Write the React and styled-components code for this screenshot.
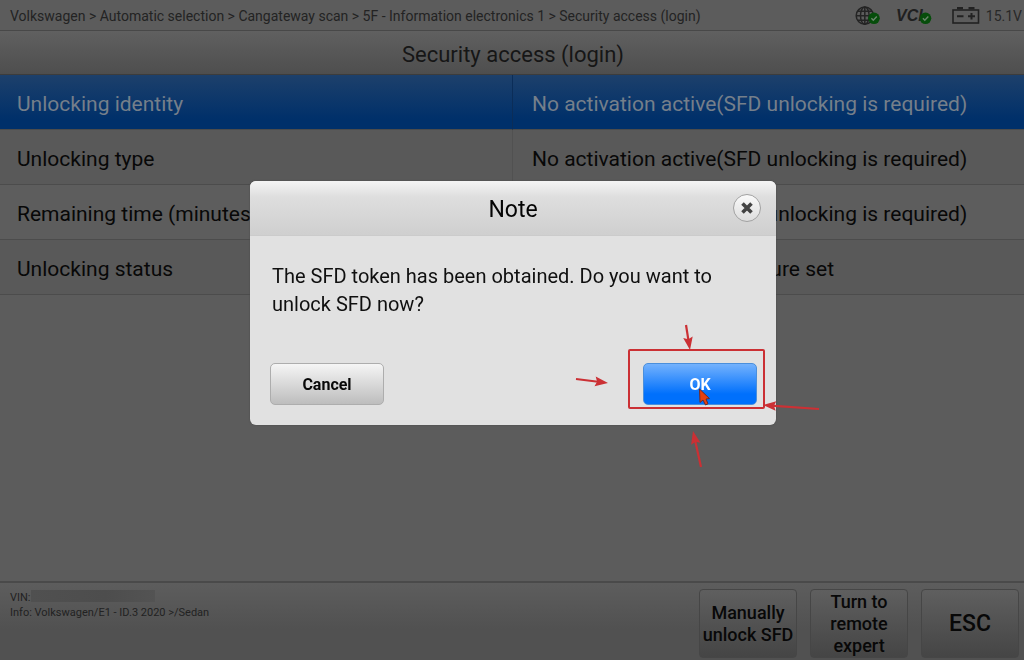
import React from 'react';
import styled, { createGlobalStyle } from 'styled-components';

const GlobalStyle = createGlobalStyle`
  * {
    box-sizing: border-box;
  }

  html,
  body,
  #root {
    height: 100%;
  }

  body {
    margin: 0;
    background: #5c5c5c;
    color: #101010;
    font-family: Roboto, 'Liberation Sans', sans-serif;
  }

  button {
    font-family: inherit;
    cursor: pointer;
  }
`;

const Screen = styled.div`
  display: flex;
  flex-direction: column;
  min-height: 100%;
  overflow: hidden;
`;

const TopBar = styled.header`
  display: flex;
  align-items: center;
  justify-content: space-between;
  height: 31px;
  padding: 1px 2px 0 10px;
  background: #5c5c5c;
  border-bottom: 1px solid #484848;
`;

const Breadcrumb = styled.nav`
  color: #232323;
  font-size: 14px;
  line-height: 20px;
  white-space: nowrap;
`;

const StatusList = styled.div`
  display: flex;
  align-items: center;
  gap: 16px;
  color: #282828;
  font-size: 14px;
  line-height: 20px;
`;

const StatusItem = styled.div`
  display: flex;
  align-items: center;
  gap: 6px;

  & svg {
    display: block;
    overflow: visible;
  }
`;

const PageTitle = styled.h1`
  margin: 0;
  height: 44px;
  padding-left: 2px;
  background: linear-gradient(#606060, #4e4e4e);
  border-bottom: 1px solid #3c3c3c;
  color: #161616;
  font-size: 22px;
  font-weight: 400;
  line-height: 48px;
  text-align: center;
`;

const Table = styled.table`
  width: 100%;
  table-layout: fixed;
  border-collapse: separate;
  border-spacing: 0;
  font-size: 21px;
  line-height: 28px;
  text-align: left;
`;

const Row = styled.tr`
  height: 55px;
  background: ${({ $active, $shade }) =>
    $active ? 'linear-gradient(#1d406b, #00306a 80%)' : $shade ? '#595959' : '#5d5d5d'};
  color: ${({ $active }) => ($active ? '#757f8a' : '#080808')};

  & > * {
    padding: 3px 17px 0;
    border-bottom: 1px solid #4c4c4c;
    font-weight: 400;
    white-space: nowrap;
  }

  & > td {
    padding-left: 19px;
    border-left: 1px solid ${({ $active }) => ($active ? '#0b2d58' : '#515151')};
  }
`;

const Footer = styled.footer`
  display: flex;
  justify-content: space-between;
  margin-top: auto;
  height: 79px;
  padding: 6px 5px 2px 10px;
  border-top: 2px solid #4a4a4a;
  background: linear-gradient(#5d5d5d, #515151 60%);
`;

const VehicleInfo = styled.div`
  padding-top: 1px;
  color: #222222;
  font-size: 11px;
  line-height: 15px;
`;

const InfoLine = styled.div`
  display: flex;
  align-items: center;
`;

const Redacted = styled.span`
  width: 124px;
  height: 12px;
  margin-bottom: 3px;
  background: linear-gradient(90deg, #505050, #4d4d4d 60%, #535353);
`;

const FooterActions = styled.div`
  display: flex;
  gap: 13px;
`;

const FooterButton = styled.button`
  width: 98px;
  height: 69px;
  padding: 1px 0 0;
  border: 1px solid #464646;
  border-radius: 4px;
  background: linear-gradient(#5f5f5f, #454545);
  color: #080808;
  font-size: ${({ $large }) => ($large ? '23px' : '18px')};
  font-weight: 500;
  line-height: 22px;
`;

const Overlay = styled.div`
  position: fixed;
  inset: 0;
  display: flex;
  align-items: center;
  justify-content: center;
  padding: 0 0 54px 2px;
`;

const Dialog = styled.section`
  position: relative;
  width: 526px;
  border-radius: 6px;
  background: #e1e1e1;
  box-shadow: 0 0 2px #4a4a4a;
`;

const DialogHeader = styled.header`
  display: grid;
  grid-template-columns: 28px 1fr 28px;
  align-items: center;
  height: 55px;
  padding: 0 15px;
  border-bottom: 1px solid #cbcbcb;
  border-radius: 6px 6px 0 0;
  background: linear-gradient(#f4f4f4, #dedede 30%, #cfcfcf);
`;

const DialogTitle = styled.h2`
  grid-column: 2;
  margin: 0;
  padding-top: 3px;
  color: #040404;
  font-size: 23px;
  font-weight: 400;
  line-height: 28px;
  text-align: center;
`;

const CloseButton = styled.button`
  display: grid;
  place-items: center;
  width: 28px;
  height: 28px;
  padding: 0;
  border: 1px solid #a2a2a2;
  border-radius: 50%;
  background: linear-gradient(#fafafa, #dddddd);
`;

const Message = styled.p`
  margin: 0;
  padding: 26px 22px 0;
  color: #101010;
  font-size: 20px;
  line-height: 28px;
`;

const DialogActions = styled.div`
  display: flex;
  justify-content: space-between;
  padding: 45px 19px 20px 20px;
`;

const DialogButton = styled.button`
  width: 114px;
  height: 42px;
  padding: 0;
  border: 1px solid ${({ $primary }) => ($primary ? '#4a8fdc' : '#adadad')};
  border-radius: 5px;
  background: ${({ $primary }) =>
    $primary ? 'linear-gradient(#74b2fd, #0070fc 75%)' : 'linear-gradient(#f5f5f5, #bdbdbd)'};
  color: ${({ $primary }) => ($primary ? '#ffffff' : '#080808')};
  font-size: 16px;
  font-weight: 700;
`;

const Annotations = styled.svg`
  position: absolute;
  top: 0;
  left: 0;
  overflow: visible;
  pointer-events: none;
`;

const rows = [
  { label: 'Unlocking identity', value: 'No activation active(SFD unlocking is required)' },
  { label: 'Unlocking type', value: 'No activation active(SFD unlocking is required)' },
  { label: 'Remaining time (minutes)', value: 'No activation active(SFD unlocking is required)' },
  { label: 'Unlocking status', value: 'No activation type procedure set' },
];

const arrows = [
  { from: [436, 144], to: [440, 169] },
  { from: [326, 198], to: [358, 202] },
  { from: [569, 228], to: [513, 224] },
  { from: [451, 286], to: [443, 250] },
];

const CheckBadge = ({ x, y }) => (
  <g transform={`translate(${x} ${y})`}>
    <circle r="5.8" fill="#064d0b" />
    <path d="M-2.6 0 L-0.7 2 L2.8 -1.8" fill="none" stroke="#6b856d" strokeWidth="1.4" />
  </g>
);

const GlobeIcon = () => (
  <svg width="25" height="20" viewBox="0 0 25 20" aria-label="Network connected">
    <g fill="none" stroke="#242424" strokeWidth="1.5">
      <circle cx="9.8" cy="9.7" r="8.6" />
      <ellipse cx="9.8" cy="9.7" rx="4.3" ry="8.6" />
      <path d="M9.8 1.1 V18.3 M1.2 9.7 H18.4 M2.8 5.2 H16.8 M2.8 14.2 H16.8" />
    </g>
    <CheckBadge x={19} y={12.3} />
  </svg>
);

const VciIcon = () => (
  <svg width="40" height="20" viewBox="0 0 40 20" aria-label="VCI connected">
    <text
      x="0"
      y="15"
      fill="#202020"
      fontFamily="'Liberation Sans', sans-serif"
      fontSize="16"
      fontStyle="italic"
      fontWeight="700"
    >
      VCI
    </text>
    <CheckBadge x={29.5} y={12.3} />
  </svg>
);

const BatteryIcon = () => (
  <svg width="28" height="20" viewBox="0 0 28 20" aria-hidden="true">
    <rect x="1" y="4" width="25.5" height="13" fill="none" stroke="#222222" strokeWidth="1.6" />
    <path d="M5 1 H11 V3.2 H5 Z M16.5 1 H22.5 V3.2 H16.5 Z" fill="#222222" />
    <path d="M5 10.3 H11.5 M16 10.3 H23 M19.5 7 V13.6" stroke="#222222" strokeWidth="2" />
  </svg>
);

const Arrow = ({ from, to }) => {
  const angle = (Math.atan2(to[1] - from[1], to[0] - from[0]) * 180) / Math.PI;
  const length = Math.hypot(to[0] - from[0], to[1] - from[1]);

  return (
    <g transform={`translate(${from[0]} ${from[1]}) rotate(${angle})`}>
      <path d={`M0 0 H${length - 8}`} stroke="#cb3034" strokeWidth="2.2" />
      <path
        d={`M${length} 0 L${length - 13} -4.8 L${length - 11} 0 L${length - 13} 4.8 Z`}
        fill="#cb3034"
      />
    </g>
  );
};

const App = () => {
  return (
    <>
      <GlobalStyle />
      <Screen>
        <TopBar>
          <Breadcrumb aria-label="Breadcrumb">
            Volkswagen &gt; Automatic selection &gt; Cangateway scan &gt; 5F - Information
            electronics 1 &gt; Security access (login)
          </Breadcrumb>
          <StatusList>
            <StatusItem>
              <GlobeIcon />
            </StatusItem>
            <StatusItem>
              <VciIcon />
            </StatusItem>
            <StatusItem>
              <BatteryIcon />
              15.1V
            </StatusItem>
          </StatusList>
        </TopBar>

        <PageTitle>Security access (login)</PageTitle>

        <Table>
          <tbody>
            {rows.map((row, index) => (
              <Row key={row.label} $active={index === 0} $shade={index % 2 === 1}>
                <th scope="row">{row.label}</th>
                <td>{row.value}</td>
              </Row>
            ))}
          </tbody>
        </Table>

        <Footer>
          <VehicleInfo>
            <InfoLine>
              VIN:
              <Redacted />
            </InfoLine>
            <InfoLine>Info: Volkswagen/E1 - ID.3 2020 &gt;/Sedan</InfoLine>
          </VehicleInfo>
          <FooterActions>
            <FooterButton>Manually unlock SFD</FooterButton>
            <FooterButton>
              Turn to
              <br />
              remote
              <br />
              expert
            </FooterButton>
            <FooterButton $large>ESC</FooterButton>
          </FooterActions>
        </Footer>
      </Screen>

      <Overlay>
        <Dialog role="dialog" aria-modal="true" aria-labelledby="note-title">
          <DialogHeader>
            <DialogTitle id="note-title">Note</DialogTitle>
            <CloseButton aria-label="Close">
              <svg width="14" height="14" viewBox="0 0 14 14">
                <path d="M2.5 2.5 L11.5 11.5 M11.5 2.5 L2.5 11.5" stroke="#434343" strokeWidth="3.6" />
              </svg>
            </CloseButton>
          </DialogHeader>
          <Message>The SFD token has been obtained. Do you want to unlock SFD now?</Message>
          <DialogActions>
            <DialogButton>Cancel</DialogButton>
            <DialogButton $primary>OK</DialogButton>
          </DialogActions>

          <Annotations width="526" height="244" viewBox="0 0 526 244" aria-hidden="true">
            <rect
              x="379"
              y="169"
              width="135"
              height="58"
              rx="1"
              fill="none"
              stroke="#cb3034"
              strokeWidth="2"
            />
            {arrows.map((arrow) => (
              <Arrow key={arrow.to.join()} {...arrow} />
            ))}
            <path
              d="M449.5 208 L450 221.5 L453 219 L455.5 224 L458 222.8 L456 218 L459.5 217.6 Z"
              fill="#e8400f"
              stroke="#6b2a2a"
              strokeWidth="1"
            />
          </Annotations>
        </Dialog>
      </Overlay>
    </>
  );
};

export default App;
